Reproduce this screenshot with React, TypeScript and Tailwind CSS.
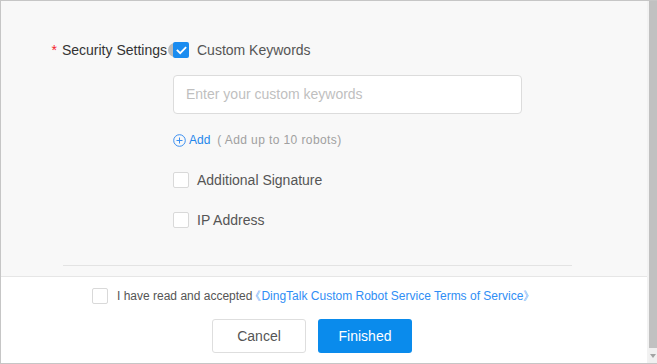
import React from "react";

function Box({ checked = false }: { checked?: boolean }) {
  if (checked) {
    return (
      <span className="relative z-10 flex h-[16px] w-[16px] shrink-0 items-center justify-center rounded-[2px] bg-[#1a8cf0]">
        <svg width="11" height="9" viewBox="0 0 11 9" fill="none">
          <path d="M1.5 4.5 L4.2 7.2 L9.5 1.8" stroke="#fff" strokeWidth="1.8" strokeLinecap="square" />
        </svg>
      </span>
    );
  }
  return <span className="h-[16px] w-[16px] shrink-0 rounded-[2px] border border-[#d9d9d9] bg-white" />;
}

export default function App() {
  return (
    <div
      className="flex h-[364px] w-[657px] border-y border-l border-[#c6c6c6] bg-white text-[14px]"
      style={{ fontFamily: '"Liberation Sans", Arial, sans-serif' }}
    >
      <div className="flex flex-1 flex-col">
        <div className="flex flex-col border-b border-[#e6e6e6] bg-[#f8f8f8] pt-[39px] pb-[10px]">
          <div className="flex h-[20px] items-center">
            <div className="flex w-[181px] items-center justify-end text-[#333]">
              <span className="mr-[5px] text-[#f5222d]">*</span>
              <span>Security Settings</span>
              <span className="ml-[1px] h-[14px] w-[14px] shrink-0 rounded-full bg-[#bbb]" />
            </div>
            <div className="-ml-[9px] flex items-center">
              <Box checked />
              <span className="ml-[8px] text-[#555]">Custom Keywords</span>
            </div>
          </div>
          <div className="ml-[172px] mt-[15px] flex h-[39px] w-[349px] items-center rounded-[4px] border border-[#dcdcdc] bg-white pl-[12px] text-[#bfbfbf]">
            Enter your custom keywords
          </div>
          <div className="ml-[172px] mt-[16px] flex h-[20px] items-center">
            <svg width="13" height="13" viewBox="0 0 13 13" fill="none">
              <circle cx="6.5" cy="6.5" r="5.8" stroke="#3a8ef0" strokeWidth="1" />
              <path d="M3.5 6.5 H9.5 M6.5 3.5 V9.5" stroke="#3a8ef0" strokeWidth="1" />
            </svg>
            <span className="ml-[3px] text-[12px] text-[#1f86eb]">Add</span>
            <span className="ml-[7px] text-[12px] tracking-[0.4px] text-[#a0a0a0]">( Add up to 10 robots)</span>
          </div>
          <div className="ml-[172px] mt-[20px] flex h-[20px] items-center">
            <Box />
            <span className="ml-[8px] text-[#555]">Additional Signature</span>
          </div>
          <div className="ml-[172px] mt-[20px] flex h-[20px] items-center">
            <Box />
            <span className="ml-[8px] text-[#555]">IP Address</span>
          </div>
          <div className="ml-[62px] mt-[35px] h-px w-[509px] bg-[#e3e3e3]" />
        </div>
        <div className="flex flex-1 flex-col bg-white">
          <div className="ml-[91px] mt-[9px] flex h-[20px] items-center text-[12px]">
            <Box />
            <span className="ml-[9px] text-[#555]">I have read and accepted</span>
            <span className="-ml-[3px] text-[#2f8ef5]">《DingTalk Custom Robot Service Terms of Service》</span>
          </div>
          <div className="ml-[211px] mt-[13px] flex gap-[12px]">
            <div className="flex h-[34px] w-[94px] items-center justify-center rounded-[3px] border border-[#dedede] bg-white text-[#555]">
              Cancel
            </div>
            <div className="flex h-[34px] w-[94px] items-center justify-center rounded-[3px] bg-[#0a8bec] text-white">
              Finished
            </div>
          </div>
        </div>
      </div>
      <div className="flex w-[10px] flex-col border-l-2 border-[#f2f2f2]">
        <div className="flex-1 bg-[#c1c1c1]" />
        <div className="flex h-[15px] items-center justify-center bg-[#f0f0f0]">
          <svg width="6" height="4" viewBox="0 0 6 4">
            <path d="M0 0 H6 L3 4 Z" fill="#a3a3a3" />
          </svg>
        </div>
      </div>
    </div>
  );
}
